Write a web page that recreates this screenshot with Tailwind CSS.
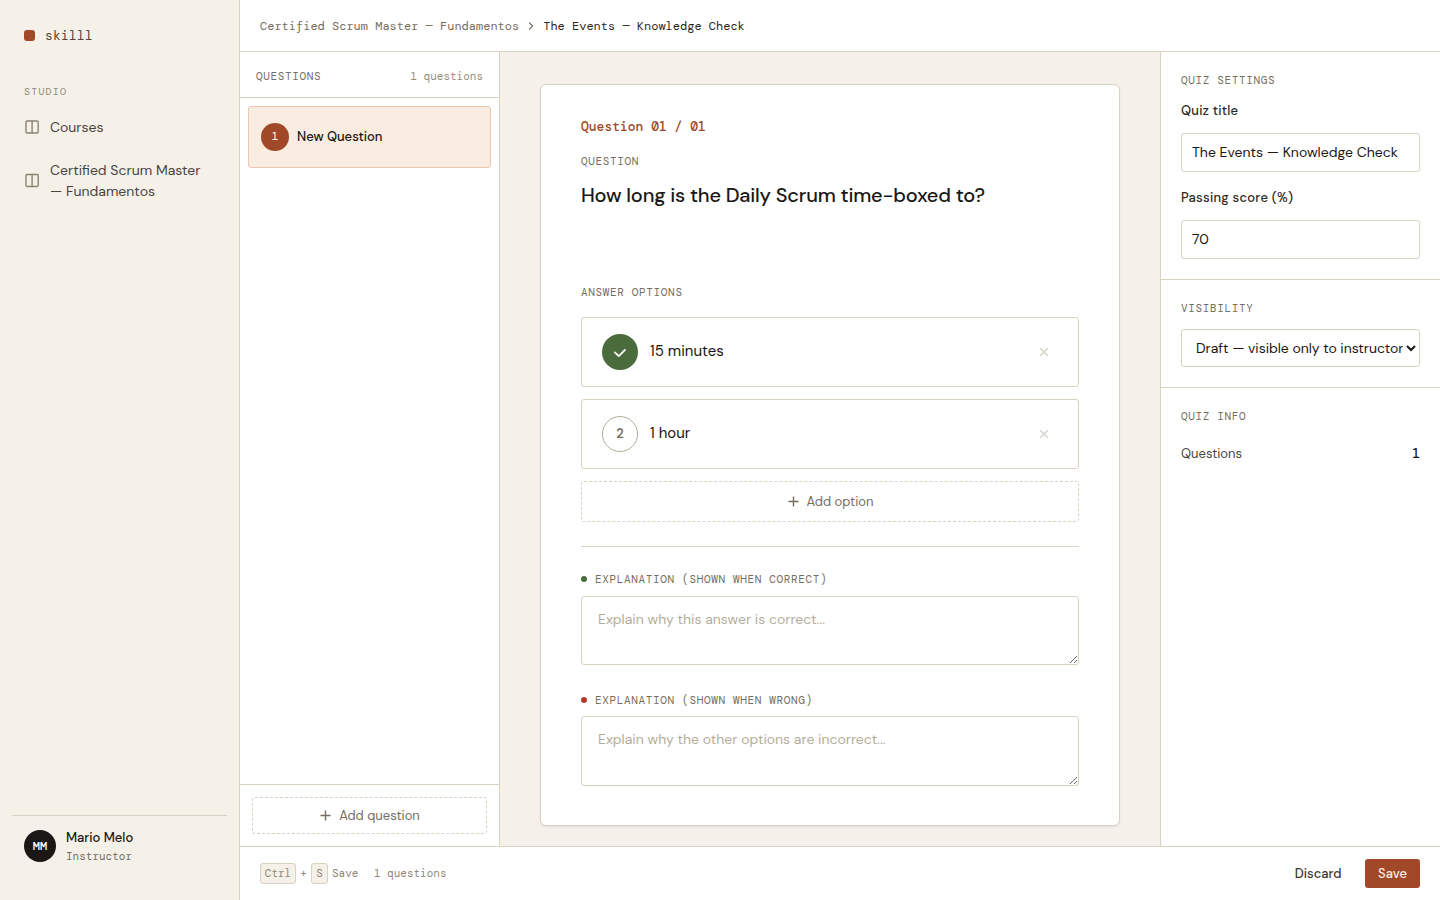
<!DOCTYPE html>
<html lang="en">
<head>
  <meta charset="UTF-8" />
  <meta name="viewport" content="width=device-width, initial-scale=1.0" />
  <title>The Events — Knowledge Check</title>
  <script src="https://cdn.jsdelivr.net/npm/@tailwindcss/browser@4"></script>
</head>
<body class="bg-[#f5f0e8] text-[#1a1714] font-['DM_Sans',Inter,sans-serif] text-sm antialiased">
  <div class="flex h-screen w-full overflow-hidden">

    <!-- Sidebar -->
    <aside class="w-60 shrink-0 flex flex-col border-r border-[#d9d1c1] px-3 pt-6 pb-6">
      <div class="flex items-center gap-2.5 px-3 h-[22px]">
        <span class="size-[11px] rounded-[3px] bg-[#a04828]"></span>
        <span class="pt-0.5 font-['DM_Mono','DejaVu_Sans_Mono',monospace] text-[13px] tracking-[0.2px] text-[#4a453c]">skilll</span>
      </div>
      <div class="mt-[38px] px-3 font-['DM_Mono','DejaVu_Sans_Mono',monospace] text-[10px] leading-[15px] tracking-[1.2px] text-[#8f8876]">STUDIO</div>
      <nav class="mt-2 flex flex-col gap-0.5 text-[#4a453c]">
        <a href="#" class="flex items-center gap-2.5 px-3 py-2.5 leading-[21px]">
          <svg class="size-4 shrink-0 text-[#8a8371]" viewBox="0 0 16 16" fill="none" stroke="currentColor" stroke-width="1.4"><rect x="2" y="1" width="12.2" height="12" rx="1.2"/><path d="M8.1 1v12"/></svg>
          <span>Courses</span>
        </a>
        <a href="#" class="flex items-center gap-2.5 px-3 py-2.5 leading-[21px]">
          <svg class="size-4 shrink-0 text-[#8a8371]" viewBox="0 0 16 16" fill="none" stroke="currentColor" stroke-width="1.4"><rect x="2" y="1.5" width="12.2" height="12" rx="1.2"/><path d="M8.1 1.5v12"/></svg>
          <span>Certified Scrum Master<br />— Fundamentos</span>
        </a>
      </nav>
      <div class="mt-auto flex items-center gap-2.5 border-t border-[#d9d1c1] px-3 pt-3 pb-3">
        <span class="flex size-8 items-center justify-center rounded-full bg-[#1a1714] text-white font-['DM_Mono','DejaVu_Sans_Mono',monospace] text-xs font-bold">MM</span>
        <div>
          <div class="text-[13px] font-medium leading-5">Mario Melo</div>
          <div class="font-['DM_Mono','DejaVu_Sans_Mono',monospace] text-[11px] leading-4 text-[#756e5f]">Instructor</div>
        </div>
      </div>
    </aside>

    <div class="flex min-w-0 flex-1 flex-col">
      <!-- Breadcrumb -->
      <header class="flex h-13 shrink-0 items-center gap-2 border-b border-[#d9d1c1] bg-white px-5 font-['DM_Mono','DejaVu_Sans_Mono',monospace] text-xs">
        <span class="text-[#756e5f]">Certified Scrum Master — Fundamentos</span>
        <svg class="h-2 w-2" viewBox="0 0 8 8" fill="none" stroke="#756e5f" stroke-width="1.1"><path d="M2.2 0.5 5.7 4 2.2 7.5"/></svg>
        <span class="text-[#2a2622]">The Events — Knowledge Check</span>
      </header>

      <div class="flex min-h-0 flex-1">
        <!-- Question list -->
        <section class="flex w-[260px] shrink-0 flex-col border-r border-[#d9d1c1] bg-white">
          <div class="flex h-[46px] items-center justify-between border-b border-[#d9d1c1] px-4 pt-[3px] font-['DM_Mono','DejaVu_Sans_Mono',monospace] text-[11px] leading-4">
            <span class="tracking-[0.66px] text-[#756e5f]">QUESTIONS</span>
            <span class="text-[#958e7c]">1 questions</span>
          </div>
          <div class="flex-1 p-2">
            <div class="flex h-[62px] items-center gap-2 rounded-[3px] border border-[#edc7b2] bg-[#faece0] px-3">
              <span class="flex size-7 items-center justify-center rounded-full bg-[#a04828] font-['DM_Mono','DejaVu_Sans_Mono',monospace] text-[11px] text-white">1</span>
              <span class="text-[13px] font-medium">New Question</span>
            </div>
          </div>
          <div class="border-t border-[#d9d1c1] p-3">
            <button class="flex h-[37px] w-full items-center justify-center gap-2 rounded-[3px] border border-dashed border-[#d9d1c1] pl-px text-[13px] text-[#756e5f]">
              <svg class="size-[11px]" viewBox="0 0 11 11" fill="none" stroke="currentColor" stroke-width="1.4"><path d="M5.5 .5v10M.5 5.5h10"/></svg>
              <span class="pt-px">Add question</span>
            </button>
          </div>
        </section>

        <!-- Editor -->
        <main class="flex-1 overflow-hidden px-10 pt-8">
          <div class="h-[742px] rounded-md border border-[#d9d1c1] bg-white px-10 pt-8 shadow-[0_1px_2px_rgba(26,23,20,0.08)]">
            <div class="font-['DM_Mono','DejaVu_Sans_Mono',monospace] text-[13px] font-medium leading-5 text-[#a04828]">Question 01 / 01</div>
            <div class="mt-4 font-['DM_Mono','DejaVu_Sans_Mono',monospace] text-[11px] leading-4 tracking-[0.66px] text-[#756e5f]">QUESTION</div>
            <div class="mt-3 h-20 text-xl font-medium leading-7 tracking-[-0.21px]">How long is the Daily Scrum time-boxed to?</div>
            <div class="mt-[23px] font-['DM_Mono','DejaVu_Sans_Mono',monospace] text-[11px] leading-4 tracking-[0.66px] text-[#756e5f]">ANSWER OPTIONS</div>

            <div class="mt-[17px] flex flex-col gap-3">
              <div class="flex h-[70px] items-center gap-3 rounded-[3px] border border-[#d9d1c1] px-5">
                <span class="flex size-9 items-center justify-center rounded-full bg-[#4a6b3c]">
                  <svg class="size-4" viewBox="0 0 16 16" fill="none" stroke="#fff" stroke-width="1.8" stroke-linecap="round" stroke-linejoin="round"><path d="M2.9 8.4 6.8 12.1 12.9 6"/></svg>
                </span>
                <span class="flex-1 pb-0.5 text-[15px] leading-6">15 minutes</span>
                <svg class="mr-[9px] size-2.5" viewBox="0 0 10 10" fill="none" stroke="#d9d6cd" stroke-width="1.6"><path d="M1.2 1.2l7.6 7.6M8.8 1.2 1.2 8.8"/></svg>
              </div>
              <div class="flex h-[70px] items-center gap-3 rounded-[3px] border border-[#d9d1c1] px-5">
                <span class="flex size-9 items-center justify-center rounded-full border border-[#b5ad9c] text-[13px] font-semibold text-[#756e5f]">2</span>
                <span class="flex-1 pb-0.5 text-[15px] leading-6">1 hour</span>
                <svg class="mr-[9px] size-2.5" viewBox="0 0 10 10" fill="none" stroke="#d9d6cd" stroke-width="1.6"><path d="M1.2 1.2l7.6 7.6M8.8 1.2 1.2 8.8"/></svg>
              </div>
              <button class="flex h-[41px] items-center justify-center gap-[7px] rounded-[3px] border border-dashed border-[#d9d1c1] pl-0.5 text-[13px] text-[#756e5f]">
                <svg class="size-[11px]" viewBox="0 0 11 11" fill="none" stroke="currentColor" stroke-width="1.4"><path d="M5.5 .5v10M.5 5.5h10"/></svg>
                <span class="pt-px">Add option</span>
              </button>
            </div>

            <div class="mt-6 border-t border-[#d9d1c1] pt-6">
              <div class="flex items-center gap-2 font-['DM_Mono','DejaVu_Sans_Mono',monospace] text-[11px] leading-4 tracking-[0.66px] text-[#756e5f]">
                <span class="size-1.5 rounded-full bg-[#4a6b3c]"></span>EXPLANATION (SHOWN WHEN CORRECT)
              </div>
              <textarea class="mt-[9px] block h-[69px] w-full resize-y rounded-[3px] border border-[#d9d1c1] px-4 py-3 text-sm leading-[21px] placeholder:text-[#b5ad9c]" placeholder="Explain why this answer is correct..."></textarea>
              <div class="mt-[27px] flex items-center gap-2 font-['DM_Mono','DejaVu_Sans_Mono',monospace] text-[11px] leading-4 tracking-[0.66px] text-[#756e5f]">
                <span class="size-1.5 rounded-full bg-[#b03a2e]"></span>EXPLANATION (SHOWN WHEN WRONG)
              </div>
              <textarea class="mt-2 block h-[70px] w-full resize-y rounded-[3px] border border-[#d9d1c1] px-4 py-3 text-sm leading-[21px] placeholder:text-[#b5ad9c]" placeholder="Explain why the other options are incorrect..."></textarea>
            </div>
          </div>
        </main>

        <!-- Settings -->
        <aside class="w-[280px] shrink-0 border-l border-[#d9d1c1] bg-white">
          <div class="h-[228px] border-b border-[#d9d1c1] px-5 pt-5">
            <div class="font-['DM_Mono','DejaVu_Sans_Mono',monospace] text-[11px] leading-4 tracking-[0.66px] text-[#756e5f]">QUIZ SETTINGS</div>
            <label class="mt-[13px] block text-[13px] font-medium leading-5 tracking-[0.26px] text-[#2e2a24]" for="title">Quiz title</label>
            <input id="title" class="mt-3 block h-[39px] w-full rounded-[3px] border border-[#d9d1c1] px-2.5 pb-0.5 text-sm" value="The Events — Knowledge Check" />
            <label class="mt-4 block text-[13px] font-medium leading-5 tracking-[0.26px] text-[#2e2a24]" for="score">Passing score (%)</label>
            <input id="score" class="mt-3 block h-[39px] w-full rounded-[3px] border border-[#d9d1c1] px-2.5 pb-0.5 text-sm" value="70" />
          </div>
          <div class="h-[108px] border-b border-[#d9d1c1] px-5 pt-5">
            <div class="font-['DM_Mono','DejaVu_Sans_Mono',monospace] text-[11px] leading-4 tracking-[0.66px] text-[#756e5f]">VISIBILITY</div>
            <select class="mt-[13px] block h-[38px] w-full rounded-[3px] border border-[#d9d1c1] bg-white pl-2.5 text-sm tracking-[-0.04px]">
              <option>Draft — visible only to instructors</option>
              <option>Published</option>
            </select>
          </div>
          <div class="px-5 pt-5">
            <div class="font-['DM_Mono','DejaVu_Sans_Mono',monospace] text-[11px] leading-4 tracking-[0.66px] text-[#756e5f]">QUIZ INFO</div>
            <div class="mt-5 flex items-center justify-between text-[13px] leading-5">
              <span class="text-[#4a453c]">Questions</span>
              <span class="font-['DM_Mono','DejaVu_Sans_Mono',monospace] font-medium">1</span>
            </div>
          </div>
        </aside>
      </div>

      <!-- Action bar -->
      <footer class="flex h-[54px] shrink-0 items-center justify-between border-t border-[#d9d1c1] bg-white px-5">
        <div class="flex items-center font-['DM_Mono','DejaVu_Sans_Mono',monospace] text-[11px] text-[#8f8876]">
          <kbd class="flex h-[21px] w-9 items-center justify-center rounded-[3px] border border-[#d9d1c1] bg-[#f5f0e8] font-['DM_Mono','DejaVu_Sans_Mono',monospace] text-[11px]">Ctrl</kbd>
          <span class="w-[15px] text-center">+</span>
          <kbd class="flex h-[21px] w-[17px] items-center justify-center rounded-[3px] border border-[#d9d1c1] bg-[#f5f0e8] font-['DM_Mono','DejaVu_Sans_Mono',monospace] text-[11px]">S</kbd>
          <span class="ml-1">Save</span>
          <span class="ml-[15.5px]">1 questions</span>
        </div>
        <div class="flex items-center text-[13px] font-medium">
          <button class="pr-[23.5px] pt-px text-[#3d382f]">Discard</button>
          <button class="h-[29px] w-[55px] rounded-[3px] bg-[#a04828] pt-px text-[#f9ece4]">Save</button>
        </div>
      </footer>
    </div>
  </div>
</body>
</html>
